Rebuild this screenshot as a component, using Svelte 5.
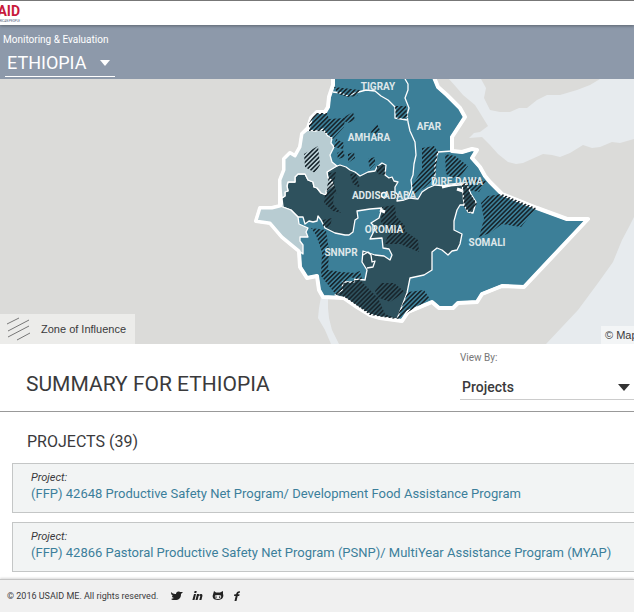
<script>
  const projects = [
    '(FFP) 42648 Productive Safety Net Program/ Development Food Assistance Program',
    '(FFP) 42866 Pastoral Productive Safety Net Program (PSNP)/ MultiYear Assistance Program (MYAP)'
  ];

  const country =
    'M333 70L333 85L329 97L328 107L325 112L317 112L311 118L308 128L302 134L300 147L295 156L290 153L284 159L284 170L280 180L280 206L272 208L260 208L256 221L270 223L282 237L299 251L300 267L307 278L317 276L319 290L323 297L344 298L357 307L370 315L380 318L402 321L408 312L432 302L439 308L453 308L458 303L477 302L482 294L502 286L524 287L588 219L567 219L537 208L502 194L490 182L485 176L480 167L472 158L477 150L472 149L462 152L452 151L452 137L465 117L460 108L447 95L438 87L431 70Z';

  const oromia =
    'M282 198L285 196L285 192L288 191L287 186L288 182L295 182L295 177L298 174L305 174L308 180L313 182L314 187L317 188L321 193L326 195L326 191L333 185L331 180L328 178L327 172L334 167L340 165L346 167L350 170L355 172L360 176L368 172L375 171L377 167L382 163L386 165L385 175L389 178L392 177L394 181L398 182L395 187L395 192L398 195L397 201L404 200L410 198L418 199L422 192L428 188L435 185L448 186L462 183L464 191L464 205L460 205L457 210L454 221L454 230L462 234L460 244L457 250L452 251L448 255L442 250L437 248L432 252L432 270L424 275L410 278L407 293L397 319L380 317L370 315L357 307L344 298L335 295L342 290L343 282L354 282L355 279L365 280L367 270L362 262L363 251L375 255L384 256L390 260L392 255L389 249L383 248L382 238L370 239L374 231L375 227L371 223L379 218L382 208L370 209L357 211L358 218L355 220L353 232L349 235L345 235L335 233L325 228L321 220L318 216L317 221L313 222L309 221L305 224L303 217L298 217L291 210L283 207Z';

  const benishangul =
    'M308 130L316 131L323 129L328 136L332 138L331 143L334 147L330 155L332 162L337 166L327 172L328 178L331 180L333 185L326 191L326 195L321 193L317 188L314 187L313 182L308 180L305 174L298 174L295 177L295 182L288 182L287 186L288 191L285 192L285 196L282 198L280 180L284 170L284 159L290 153L295 156L300 147L302 134Z';

  const gambela =
    'M280 206L291 210L298 217L299 224L308 228L306 232L308 237L300 237L300 241L303 245L303 254L299 251L282 237L270 223L256 221L260 208Z';

  const borders = [
    'M405 79L408 84L408 90L405 98L409 108L407 115L408 122L410 131L415 142L416 155L414 164L413 175L411 180L412 188L408 198',
    'M333 92L341 93L348 96L355 93L366 90L375 91L381 96L388 100L395 107L395 118L407 120',
    'M452 151L438 152L435 165L435 175L433 185',
    'M363 255L368 252L371 255L372 262L375 261L373 267L367 268'
  ];

  const zones = [
    'M309 123L315 113L327 113L329 119L345 118L344 127L333 139L323 131L309 131Z',
    'M346 116L353 112L355 120L348 123L342 120Z',
    'M334 87L360 90L357 96L348 97L338 94Z',
    'M395 106L406 106L408 118L396 119Z',
    'M304 154L318 146L320 165L315 173L305 167Z',
    'M336 139L344 143L343 149L334 147Z',
    'M337 153L343 150L345 157L338 159Z',
    'M348 154L354 152L355 158L348 163Z',
    'M371 132L377 124L380 130L378 136L373 135Z',
    'M368 159L375 157L375 164L370 169Z',
    'M377 166L384 165L386 175L377 174Z',
    'M422 148L434 146L438 152L435 178L424 188L414 194L412 185L422 170Z',
    'M445 154L455 156L468 166L458 180L446 174Z',
    'M461 183L472 178L486 181L479 192L468 190L477 204L470 214L464 207Z',
    'M488 196L502 194L536 208L521 227L502 224L490 233L479 237L484 219L481 203Z',
    'M329 173L336 172L334 184L337 193L326 197Z',
    'M350 174L356 173L360 188L353 184Z',
    'M325 195L334 194L333 204L341 213L333 211L324 203Z',
    'M382 207L395 205L396 216L405 226L405 231L418 240L419 252L400 244L385 244L389 232L381 222Z',
    'M311 228L326 230L329 251L328 270L341 272L356 273L343 283L344 288L337 296L321 276L322 252L316 235Z',
    'M347 276L360 271L362 279L343 283L339 294L349 300L370 315L396 319L408 292L424 290L430 299L408 312L398 319L385 314L375 291L381 283L394 283L405 292L390 302L377 297L360 280Z',
    'M323 220L332 218L330 227L323 227Z'
  ];

  const labels = [
    ['TIGRAY', 378, 90],
    ['AMHARA', 369, 141],
    ['AFAR', 429, 130],
    ['DIRE DAWA', 457, 185],
    ['ADDIS ABABA', 384, 199],
    ['OROMIA', 384, 233],
    ['SNNPR', 341, 256],
    ['SOMALI', 487, 246]
  ];
</script>

<div class="page">
  <header>
    <a class="logo" href="#home" aria-label="USAID">
      <span class="mark">USAID</span>
      <span class="tagline">FROM THE AMERICAN PEOPLE</span>
    </a>
  </header>

  <div class="banner">
    <label for="country">Monitoring &amp; Evaluation</label>
    <div class="picker country">
      <select id="country"><option>ETHIOPIA</option></select>
      <svg width="10" height="6" viewBox="0 0 10 6" aria-hidden="true"><path d="M0 0H10L5 6Z" fill="#fff" /></svg>
    </div>
  </div>

  <div class="map">
    <svg class="canvas" viewBox="0 79 634 265" preserveAspectRatio="xMidYMid slice" role="img" aria-label="Map of Ethiopia">
      <defs>
        <pattern id="hatch" width="3.2" height="3.2" patternUnits="userSpaceOnUse" patternTransform="rotate(-45)">
          <rect width="3.2" height="1.6" fill="#18262d" />
        </pattern>
      </defs>
      <g fill="#e7ebee">
        <path d="M449 79L457 88L463 95L475 105L480 113L488 126L480 132L474 133L469 138L482 137L490 145L498 154L508 162L516 164L523 163L543 154L552 155L560 157L570 153L583 145L592 148L600 147L612 142L620 143L634 139V79H600L590 85L577 90L560 95L547 95L537 100L527 108L519 108L510 112L500 112L490 110L484 98L486 88L481 79Z" />
        <path d="M634 217L630 225L622 240L613 262L598 283L578 310L546 344H634Z" />
        <path d="M321 297L328 297L328 308L329 318L332 330L339 344H331L325 330L318 318L319 308Z" />
      </g>
      <path d={country} fill="#3c7f98" stroke="#fff" stroke-width="4" stroke-linejoin="round" />
      <g stroke="#fff" stroke-width="1.3" stroke-linejoin="round">
        <path d={oromia} fill="#2e515d" />
        <path d="M462 183L467 185L471 194L476 202L473 213L468 212L464 205Z" fill="#2e515d" />
        <path d={benishangul} fill="#b8ccd2" />
        <path d={gambela} fill="#b8ccd2" />
        {#each borders as d}
          <path {d} fill="none" />
        {/each}
      </g>
      <path d={country} fill="none" stroke="#fff" stroke-width="3" stroke-linejoin="round" />
      <g fill="url(#hatch)">
        {#each zones as d}
          <path {d} />
        {/each}
      </g>
      <circle cx="384" cy="195" r="2.5" fill="#3c7f98" stroke="#fff" stroke-width="1.5" />
      <path d="M380 210L385 212M442 187L450 185L462 184M457 189L463 191" stroke="#fff" stroke-width="3" />
      <g class="labels">
        {#each labels as [name, x, y]}
          <text {x} {y}>{name}</text>
        {/each}
      </g>
    </svg>

    <div class="legend">
      <svg width="24" height="24" viewBox="0 0 24 24" aria-hidden="true">
        <path d="M0 7L12 1M1 14L22 3M1 20L22 9M10 23L23 16" stroke="#777" stroke-width="1" />
      </svg>
      <span>Zone of Influence</span>
    </div>
    <div class="credit">© Mapbox</div>
  </div>

  <main>
    <div class="summary">
      <h1>SUMMARY FOR ETHIOPIA</h1>
      <div class="view">
        <label for="view">View By:</label>
        <div class="picker">
          <select id="view"><option>Projects</option></select>
          <svg width="12" height="7" viewBox="0 0 12 7" aria-hidden="true"><path d="M0 0H12L6 7Z" fill="#333" /></svg>
        </div>
      </div>
    </div>

    <section>
      <h2>PROJECTS (39)</h2>
      {#each projects as project}
        <article>
          <em>Project:</em>
          <a href="#project">{project}</a>
        </article>
      {/each}
    </section>
  </main>

  <footer>
    <span>© 2016 USAID ME. All rights reserved.</span>
    <nav>
      <a href="#twitter" aria-label="Twitter">
        <svg width="12" height="10" viewBox="0 0 12 10"><path d="M0 1C2 3 4 3 5 3C5 1 7 0 9 1L12 1L10 3C10 7 8 9 4 9C2 9 1 9 0 8L3 7C2 7 1 6 1 5H2C0 4 0 2 0 1Z" fill="#222" /></svg>
      </a>
      <a href="#linkedin" aria-label="LinkedIn">
        <svg width="11" height="10" viewBox="0 0 11 10"><path d="M2 3H4L2.5 9H.4ZM2.6 0H4.7L4.3 2H2.2ZM5 3H7L6.9 4C8 2.5 10.9 2.6 10.4 5L9.4 9H7.3L8.2 5.5C8.5 4.2 6.8 4.2 6.5 5.5L5.6 9H3.5Z" fill="#222" /></svg>
      </a>
      <a href="#github" aria-label="GitHub">
        <svg width="12" height="10" viewBox="0 0 12 10"><path d="M2 0L4 1.5H8L11 0V3C12 5 11 9 6 9C1 9 0 6 1 3.5Z" fill="#222" /><path d="M3 4.5Q6 3.5 9 4.5Q10 8 6 8Q2 8 3 4.5Z" fill="#eee" /><path d="M4 5.3V7M7.7 5.3V7" stroke="#222" /></svg>
      </a>
      <a href="#facebook" aria-label="Facebook">
        <svg width="8" height="10" viewBox="0 0 8 10"><path d="M1.5 10L2.7 5H1L1.4 3.2H3.1C3.5 1 4.7 0 7 .2L6.6 2C5.5 1.9 5.2 2.2 5 3.2H6.6L6.2 5H4.7L3.5 10Z" fill="#222" /></svg>
      </a>
    </nav>
  </footer>
</div>

<style>
  :global(body) {
    margin: 0;
  }
  .page {
    display: flex;
    flex-direction: column;
    min-height: 100vh;
    overflow: hidden;
    background: #fff;
    color: #3a3a3c;
    font-family: Roboto, "Liberation Sans", sans-serif;
  }
  header {
    position: relative;
    height: 24px;
    border-top: 1px solid #777;
    box-shadow: 0 1px 3px rgba(0, 0, 0, 0.35);
  }
  .logo {
    display: flex;
    flex-direction: column;
    align-items: flex-end;
    width: 20px;
    padding-top: 2px;
    white-space: nowrap;
    text-decoration: none;
  }
  .mark {
    color: #c8193c;
    font-size: 14px;
    line-height: 16px;
    font-weight: 700;
  }
  .tagline {
    color: #4a5578;
    font-size: 3px;
    line-height: 4px;
  }
  .banner {
    height: 54px;
    box-sizing: border-box;
    padding: 8px 3px 0;
    background: #8d99aa;
    color: #fff;
  }
  .banner label {
    display: block;
    font-size: 10px;
    line-height: 14px;
  }
  .picker {
    display: flex;
    align-items: center;
    position: relative;
    border-bottom: 1px solid #ccc;
  }
  .picker select {
    width: 100%;
    padding: 0 2px;
    border: 0;
    appearance: none;
    background: transparent;
    color: inherit;
    font: inherit;
  }
  .picker svg {
    position: absolute;
    right: 5px;
    pointer-events: none;
  }
  .country {
    width: 110px;
    margin-left: 2px;
    padding: 3px 0 1px;
    border-color: #fff;
    font-size: 18px;
    line-height: 25px;
  }
  .map {
    position: relative;
    height: 265px;
    background: #dbdbd9;
    font-family: "Liberation Sans", Arial, sans-serif;
    font-size: 11px;
  }
  .canvas {
    display: block;
    width: 100%;
    height: 100%;
  }
  .labels {
    fill: #dfe7ea;
    font-family: Roboto, sans-serif;
    font-size: 10px;
    font-weight: 700;
    text-anchor: middle;
  }
  .legend {
    position: absolute;
    left: 0;
    bottom: 0;
    display: flex;
    align-items: center;
    gap: 10px;
    height: 30px;
    padding: 0 9px 0 7px;
    background: #ececea;
  }
  .credit {
    position: absolute;
    right: 0;
    bottom: 0;
    width: 29px;
    height: 18px;
    padding-left: 4px;
    overflow: hidden;
    background: #f3f5f6;
    line-height: 18px;
    white-space: nowrap;
  }
  .summary {
    display: flex;
    justify-content: space-between;
    height: 67px;
    padding-left: 26px;
    border-bottom: 1px solid #999;
  }
  h1 {
    margin: 26px 0 0;
    font-size: 21px;
    line-height: 28px;
    font-weight: 400;
  }
  .view {
    width: 174px;
  }
  .view label {
    display: block;
    padding-top: 7px;
    color: #777;
    font-size: 10px;
    line-height: 14px;
  }
  .view .picker {
    padding: 12px 0 1px;
    font-size: 14px;
    line-height: 21px;
    font-weight: 500;
  }
  .view .picker svg {
    right: 4px;
  }
  section {
    padding: 20px 0 0 12px;
  }
  h2 {
    margin: 0 0 11px 15px;
    font-size: 16px;
    line-height: 20px;
    font-weight: 400;
  }
  article {
    height: 48px;
    margin: 0 -2px 9px 0;
    padding-left: 18px;
    border: 1px solid #c4c6c6;
    background: #f2f4f4;
  }
  article em {
    display: block;
    padding-top: 7px;
    font-size: 11px;
    line-height: 14px;
  }
  article a {
    display: block;
    color: #3c7f9b;
    font-size: 13px;
    line-height: 18px;
    font-weight: 400;
    text-decoration: none;
    white-space: nowrap;
  }
  footer {
    display: flex;
    align-items: center;
    gap: 13px;
    flex: 1;
    margin-top: -2px;
    padding: 0 7px;
    border-top: 1px solid #c4c4c4;
    box-shadow: 0 -1px 2px rgba(0, 0, 0, 0.15);
    background: #f0f0f0;
    font-size: 9px;
  }
  nav {
    display: flex;
    gap: 9px;
  }
  nav a {
    display: flex;
  }
</style>
